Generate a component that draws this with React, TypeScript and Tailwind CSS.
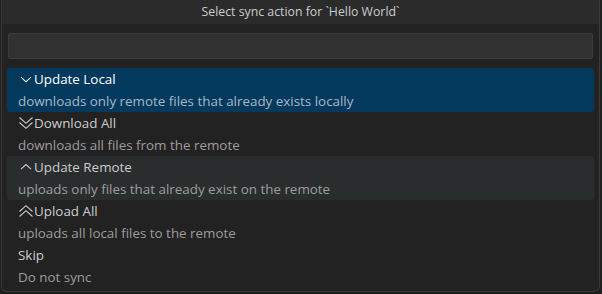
import React from "react";

const font = { fontFamily: '"Open Sans", "Noto Sans", sans-serif' };

function ChevronDown() {
  return (
    <svg width="16" height="16" viewBox="0 0 16 16" fill="none" stroke="currentColor" strokeWidth="1.1">
      <path d="M3 6.2 L8 10.8 L13 6.2" />
    </svg>
  );
}
function ChevronUp() {
  return (
    <svg width="16" height="16" viewBox="0 0 16 16" fill="none" stroke="currentColor" strokeWidth="1.1">
      <path d="M3 10.2 L8 5.6 L13 10.2" />
    </svg>
  );
}
function FoldDown() {
  return (
    <svg width="16" height="16" viewBox="0 0 16 16" fill="none" stroke="currentColor" strokeWidth="1.1">
      <path d="M1.5 2.5 L8 8.3 L14.5 2.5" />
      <path d="M1.5 7.5 L8 13.3 L14.5 7.5" />
    </svg>
  );
}
function FoldUp() {
  return (
    <svg width="16" height="16" viewBox="0 0 16 16" fill="none" stroke="currentColor" strokeWidth="1.1">
      <path d="M1.5 8.5 L8 2.7 L14.5 8.5" />
      <path d="M1.5 13.5 L8 7.7 L14.5 13.5" />
    </svg>
  );
}

type Item = { icon?: React.ReactNode; label: string; desc: string; state?: "active" | "hover" };

const items: Item[] = [
  { icon: <ChevronDown />, label: "Update Local", desc: "downloads only remote files that already exists locally", state: "active" },
  { icon: <FoldDown />, label: "Download All", desc: "downloads all files from the remote" },
  { icon: <ChevronUp />, label: "Update Remote", desc: "uploads only files that already exist on the remote", state: "hover" },
  { icon: <FoldUp />, label: "Upload All", desc: "uploads all local files to the remote" },
  { label: "Skip", desc: "Do not sync" },
];

export default function App() {
  return (
    <div className="w-[602px] h-[294px] bg-[#1f1f1f] pl-[1px] pr-[2px] pb-[2px]" style={font}>
      <div className="h-full flex flex-col rounded-b-[6px] border-x border-b border-[#3a3a3a] bg-[#222222] overflow-hidden text-[13.4px]">
        <div className="h-[24px] shrink-0 bg-[#2b2b2b] flex items-center justify-center text-[#cccccc] text-[12.3px]">
          Select sync action for `Hello World`
        </div>
        <div className="px-[6px] pt-[9px]">
          <div className="h-[26px] rounded-[2px] border border-[#3c3c3c] bg-[#313131]" />
        </div>
        <div className="px-[5px] pt-[9px] flex flex-col">
          {items.map((it) => (
            <div
              key={it.label}
              className={
                "h-[44px] rounded-[3px] pl-[11px] flex flex-col " +
                (it.state === "active"
                  ? "bg-[#04395e] text-white"
                  : it.state === "hover"
                  ? "bg-[#2a2d2e] text-[#cccccc]"
                  : "text-[#cccccc]")
              }
            >
              <div className="h-[22px] flex items-center">
                {it.icon && <span className="flex items-center w-[16px] h-[16px]">{it.icon}</span>}
                <span>{it.label}</span>
              </div>
              <div
                className={
                  "h-[22px] flex items-center " +
                  (it.state === "active" ? "text-[#a8b8c6]" : "text-[#9d9d9d]")
                }
              >
                {it.desc}
              </div>
            </div>
          ))}
        </div>
      </div>
    </div>
  );
}
